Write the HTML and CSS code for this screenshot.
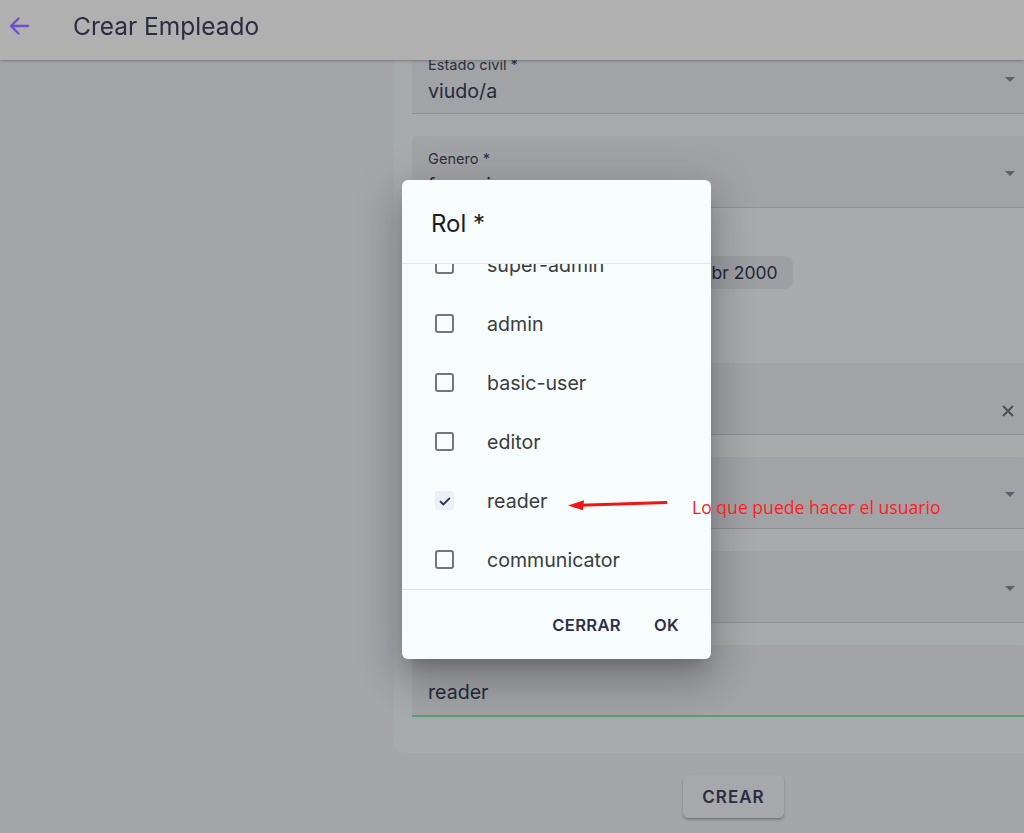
FILE: index.html
```html
<!DOCTYPE html>
<html lang="es">
<head>
<meta charset="utf-8">
<title>Crear Empleado</title>
<link rel="stylesheet" href="styles.css">
</head>
<body>
<header class="topbar">
  <span class="back">
    <svg width="24" height="24" viewBox="0 0 24 24"><path d="M21 12H4.5M11.5 4.5L4 12l7.5 7.5" fill="none" stroke="currentColor" stroke-width="2.3" stroke-linecap="round" stroke-linejoin="round"/></svg>
  </span>
  <h1 class="title">Crear Empleado</h1>
</header>

<main class="page">
  <div class="spacer"></div>
  <div class="column">
    <section class="card">
      <div class="field">
        <div class="field-body">
          <div class="label">Estado civil *</div>
          <div class="value">viudo/a</div>
        </div>
        <span class="caret"></span>
      </div>
      <div class="field">
        <div class="field-body">
          <div class="label">Genero *</div>
          <div class="value">femenino</div>
        </div>
        <span class="caret"></span>
      </div>
      <div class="date-block">
        <div class="date-label">Fecha</div>
        <div class="chip">12 abr 2000</div>
      </div>
      <div class="field">
        <div class="field-body">
          <div class="label">Cargo</div>
          <div class="value">Jefe</div>
        </div>
        <svg class="clear" width="14" height="14" viewBox="0 0 14 14"><path d="M2 2l10 10M12 2L2 12" stroke="currentColor" stroke-width="1.8"/></svg>
      </div>
      <div class="field">
        <div class="field-body">
          <div class="label">Área</div>
          <div class="value">Ventas</div>
        </div>
        <span class="caret"></span>
      </div>
      <div class="field">
        <div class="field-body">
          <div class="label">Sede</div>
          <div class="value">Lima</div>
        </div>
        <span class="caret"></span>
      </div>
      <div class="field field-active">
        <div class="field-body">
          <div class="value value-solo">reader</div>
        </div>
      </div>
    </section>
    <div class="actions">
      <button class="btn-create">CREAR</button>
    </div>
  </div>
</main>

<div class="dialog">
  <div class="dialog-title">Rol *</div>
  <div class="dialog-list">
    <div class="opt opt-first"><span class="box"></span><span class="opt-text">super-admin</span></div>
    <div class="opt"><span class="box"></span><span class="opt-text">admin</span></div>
    <div class="opt"><span class="box"></span><span class="opt-text">basic-user</span></div>
    <div class="opt"><span class="box"></span><span class="opt-text">editor</span></div>
    <div class="opt"><span class="box box-checked"><svg width="14" height="14" viewBox="0 0 14 14"><path d="M2 7.2l3.3 3.3 6.5-6.5" fill="none" stroke="currentColor" stroke-width="1.8"/></svg></span><span class="opt-text">reader</span></div>
    <div class="opt"><span class="box"></span><span class="opt-text">communicator</span></div>
  </div>
  <div class="dialog-actions">
    <button class="dlg-btn">CERRAR</button>
    <button class="dlg-btn">OK</button>
  </div>
</div>

<div class="note">
  <svg class="note-arrow" width="102" height="14" viewBox="0 0 102 14"><path d="M12 8.3L98 5.6" stroke="#f01616" stroke-width="3" stroke-linecap="round"/><path d="M0 8.6L16 3.2L15 13.2Z" fill="#f01616"/></svg>
  <span class="note-text">Lo que puede hacer el usuario</span>
</div>
</body>
</html>
```

FILE: styles.css
```css
* { box-sizing: border-box; }

html, body {
  margin: 0;
  height: 833px;
  overflow: hidden;
}

body {
  background: #a5a6aa;
  font-family: Inter, "Noto Sans", sans-serif;
  color: #2a2c3c;
}

.topbar {
  position: fixed;
  top: 0;
  left: 0;
  right: 0;
  height: 60px;
  padding-bottom: 9px;
  background: #b0b0b0;
  display: flex;
  align-items: center;
  box-shadow: 0 1px 2px rgba(0,0,0,0.18), 0 2px 3px rgba(0,0,0,0.08);
  z-index: 5;
}

.back {
  width: 24px;
  height: 24px;
  margin-left: 7px;
  color: #6d4fcc;
  display: flex;
}

.title {
  margin: 0 0 0 42px;
  font-size: 24.5px;
  font-weight: 400;
  color: #2b2b42;
}

.page {
  display: grid;
  grid-template-columns: 394px 679px;
}

.column {
  display: flex;
  flex-direction: column;
}

.card {
  background: #a8abac;
  border-radius: 12px;
  padding: 42px 47px 36px 18px;
  display: flex;
  flex-direction: column;
  gap: 22px;
}

.field {
  height: 72px;
  background: #a2a3a7;
  border-radius: 5px 5px 0 0;
  border-bottom: 1px solid #8f9094;
  padding: 0 11px 0 16px;
  display: flex;
  align-items: center;
}

.field-body {
  flex: 1;
  align-self: stretch;
  padding-top: 14px;
}

.label {
  font-size: 14.6px;
  line-height: 18px;
  color: #2c2f3c;
}

.value {
  margin-top: 4px;
  font-size: 19.6px;
  line-height: 26px;
  color: #262a3a;
}

.value-solo {
  margin-top: 20px;
}

.caret {
  width: 0;
  height: 0;
  border-left: 5.5px solid transparent;
  border-right: 5.5px solid transparent;
  border-top: 5.5px solid #5d5e6c;
  margin-top: 3px;
}

.clear {
  color: #4b4c52;
  margin-top: 24px;
}

.field-active {
  border-bottom: 2px solid #5e9c79;
}

.date-block {
  height: 111px;
  padding-top: 26px;
  display: flex;
  align-items: flex-start;
}

.date-label {
  font-size: 15px;
  color: #2c2f3c;
  padding-top: 8px;
  width: 252px;
}

.chip {
  height: 33px;
  padding: 0 15px;
  background: #9e9fa3;
  border-radius: 9px;
  font-size: 17.5px;
  line-height: 33px;
  color: #23263a;
}

.actions {
  display: flex;
  justify-content: center;
  padding-top: 22px;
}

.btn-create {
  width: 101px;
  height: 43px;
  border: 0;
  border-radius: 5px;
  background: #a7a8ac;
  box-shadow: 0 2px 3px rgba(0,0,0,0.22), 0 1px 1px rgba(0,0,0,0.1);
  font-family: Inter, "Noto Sans", sans-serif;
  font-size: 17px;
  font-weight: 600;
  letter-spacing: 1px;
  color: #2a2c40;
}

.dialog {
  position: absolute;
  left: 402px;
  top: 180px;
  width: 309px;
  height: 479px;
  background: #f7fdfd;
  border-radius: 6px;
  box-shadow: 0 11px 15px -7px rgba(0,0,0,0.2), 0 24px 38px 3px rgba(0,0,0,0.14), 0 9px 46px 8px rgba(0,0,0,0.12);
  display: flex;
  flex-direction: column;
  overflow: hidden;
  z-index: 10;
}

.dialog-title {
  height: 84px;
  padding: 29px 29px 0;
  font-size: 24px;
  line-height: 30px;
  color: #1c1c22;
  border-bottom: 1px solid #e2e6e6;
}

.dialog-list {
  height: 325px;
  overflow: hidden;
}

.opt {
  height: 59px;
  display: flex;
  align-items: center;
  padding-left: 33px;
}

.opt-first {
  margin-top: -29px;
}

.box {
  width: 19px;
  height: 19px;
  border: 2px solid #767676;
  border-radius: 3px;
  flex: none;
  display: flex;
  align-items: center;
  justify-content: center;
}

.box-checked {
  border: 0;
  background: #eceef8;
  color: #2c2f5c;
}

.opt-text {
  margin-left: 33px;
  font-size: 19.6px;
  color: #3b3c40;
}

.dialog-actions {
  flex: 1;
  border-top: 1px solid #e0e4e4;
  display: flex;
  justify-content: flex-end;
  align-items: center;
  gap: 11px;
  padding: 0 21px 0 0;
}

.dlg-btn {
  border: 0;
  background: transparent;
  padding: 6px 11px;
  font-family: Inter, "Noto Sans", sans-serif;
  font-size: 16.6px;
  font-weight: 600;
  letter-spacing: 0.3px;
  color: #2e2f4a;
}

.note {
  position: absolute;
  left: 568px;
  top: 489px;
  display: flex;
  align-items: center;
  z-index: 11;
}

.note-arrow {
  flex: none;
}

.note-text {
  margin-left: 22px;
  margin-top: 6px;
  font-family: "Open Sans", "Noto Sans", sans-serif;
  font-size: 17.6px;
  color: #ff1e1e;
}
```
